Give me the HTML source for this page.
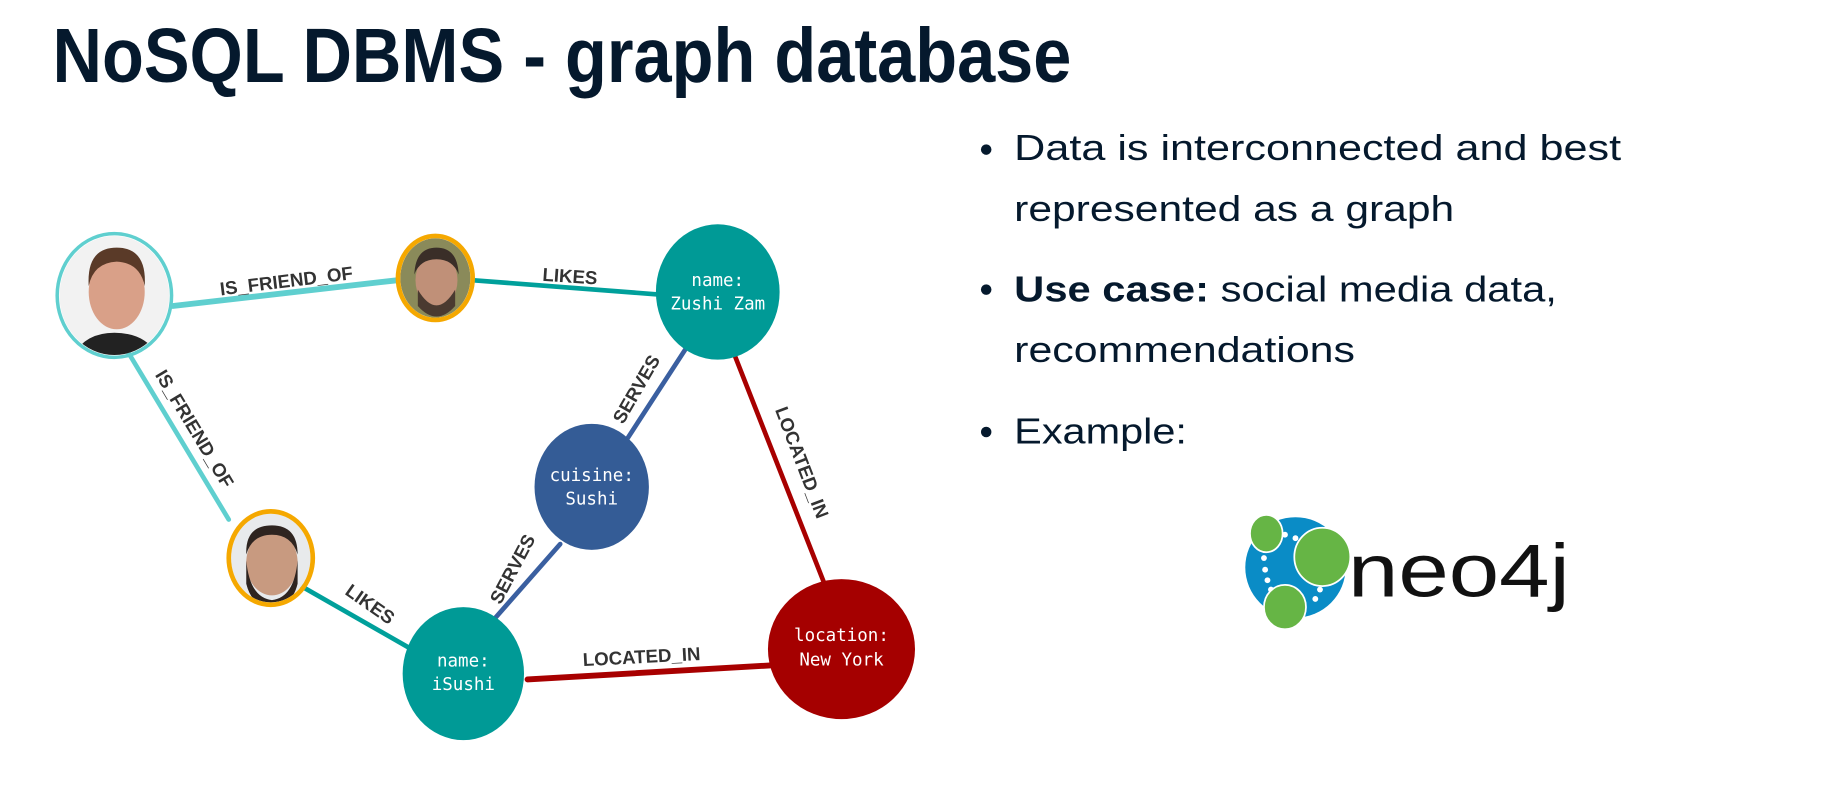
<!DOCTYPE html>
<html><head><meta charset="utf-8"><style>
html,body{margin:0;padding:0;background:#fff;}
svg{display:block;}
</style></head><body>
<svg width="1830" height="801" viewBox="0 0 1568 686" xmlns="http://www.w3.org/2000/svg">
<rect width="1568" height="686" fill="#fff"/>
<text x="45" y="70" font-family="Liberation Sans, sans-serif" font-weight="bold" font-size="66" fill="#05192d" textLength="873" lengthAdjust="spacingAndGlyphs">NoSQL DBMS - graph database</text>

<!-- bullets -->
<g font-family="Liberation Sans, sans-serif" font-size="31" fill="#05192d">
<circle cx="845" cy="128" r="4.5"/>
<text x="869" y="137" textLength="520" lengthAdjust="spacingAndGlyphs">Data is interconnected and best</text>
<text x="869" y="189" textLength="377" lengthAdjust="spacingAndGlyphs">represented as a graph</text>
<circle cx="845" cy="248" r="4.5"/>
<text x="869" y="258" textLength="465" lengthAdjust="spacingAndGlyphs"><tspan font-weight="bold">Use case:</tspan> social media data,</text>
<text x="869" y="310" textLength="292" lengthAdjust="spacingAndGlyphs">recommendations</text>
<circle cx="845" cy="370" r="4.5"/>
<text x="869" y="380" textLength="148" lengthAdjust="spacingAndGlyphs">Example:</text>
</g>

<!-- neo4j logo -->
<circle cx="1110" cy="486" r="43" fill="#0a8cc6"/>
<g fill="#fff">
<circle cx="1101" cy="458" r="2.5"/><circle cx="1110" cy="461" r="2.5"/>
<circle cx="1083" cy="478" r="2.5"/><circle cx="1084" cy="488" r="2.5"/><circle cx="1086" cy="497" r="2.5"/><circle cx="1089" cy="505" r="2.5"/>
<circle cx="1131" cy="505" r="2.5"/><circle cx="1127" cy="513" r="2.5"/>
</g>
<ellipse cx="1085" cy="457" rx="14" ry="16" fill="#66b545" stroke="#fff" stroke-width="1.5"/>
<ellipse cx="1133" cy="477" rx="24" ry="25" fill="#66b545" stroke="#fff" stroke-width="1.5"/>
<ellipse cx="1101" cy="520" rx="18" ry="19" fill="#66b545" stroke="#fff" stroke-width="1.5"/>
<text x="1155" y="511" font-family="Liberation Sans, sans-serif" font-size="64" fill="#111" textLength="190" lengthAdjust="spacingAndGlyphs">neo4j</text>

<!-- edges -->
<g stroke-linecap="round">
<line x1="148" y1="262" x2="340" y2="240" stroke="#5fcfcf" stroke-width="5"/>
<line x1="406" y1="240" x2="562" y2="252" stroke="#00a09b" stroke-width="4"/>
<line x1="110" y1="302" x2="196" y2="445" stroke="#5fcfcf" stroke-width="4"/>
<line x1="258" y1="502" x2="356" y2="558" stroke="#00a09b" stroke-width="4"/>
<line x1="588" y1="298" x2="536" y2="378" stroke="#3a5fa0" stroke-width="4"/>
<line x1="480" y1="466" x2="422" y2="532" stroke="#3a5fa0" stroke-width="4"/>
<line x1="629" y1="303" x2="706" y2="499" stroke="#a80000" stroke-width="4"/>
<line x1="452" y1="582" x2="660" y2="570" stroke="#a80000" stroke-width="5"/>
</g>
<g font-family="Liberation Sans, sans-serif" font-weight="bold" font-size="16" fill="#333" text-anchor="middle">
<text transform="translate(246,246) rotate(-7)">IS_FRIEND_OF</text>
<text transform="translate(488,242) rotate(4)">LIKES</text>
<text transform="translate(162,370) rotate(59)">IS_FRIEND_OF</text>
<text transform="translate(314,522) rotate(35)">LIKES</text>
<text transform="translate(550,336) rotate(-60)">SERVES</text>
<text transform="translate(444,490) rotate(-62)">SERVES</text>
<text transform="translate(682,398) rotate(69)">LOCATED_IN</text>
<text transform="translate(550,568) rotate(-3)">LOCATED_IN</text>
</g>

<!-- nodes -->
<ellipse cx="615" cy="250" rx="53" ry="58" fill="#009a96"/>
<ellipse cx="507" cy="417" rx="49" ry="54" fill="#345c96"/>
<ellipse cx="397" cy="577" rx="52" ry="57" fill="#009a96"/>
<ellipse cx="721" cy="556" rx="63" ry="60" fill="#a50000"/>
<g font-family="DejaVu Sans Mono, Liberation Mono, monospace" font-size="15" fill="#fff" text-anchor="middle">
<text x="615" y="245">name:</text><text x="615" y="265">Zushi Zam</text>
<text x="507" y="412">cuisine:</text><text x="507" y="432">Sushi</text>
<text x="397" y="571">name:</text><text x="397" y="591">iSushi</text>
<text x="721" y="549">location:</text><text x="721" y="570">New York</text>
</g>

<!-- person 1 -->
<defs>
<clipPath id="c1"><ellipse cx="98" cy="253" rx="47" ry="51"/></clipPath>
<clipPath id="c2"><ellipse cx="373" cy="238" rx="30" ry="34"/></clipPath>
<clipPath id="c3"><ellipse cx="232" cy="478" rx="34" ry="38"/></clipPath>
</defs>
<g clip-path="url(#c1)">
<rect x="50" y="200" width="100" height="110" fill="#f2f2f2"/>
<path d="M60 310 Q70 285 98 285 Q128 285 138 310 Z" fill="#222"/>
<ellipse cx="100" cy="250" rx="24" ry="32" fill="#d9a088"/>
<path d="M76 245 Q74 212 100 212 Q126 212 124 245 Q120 225 100 224 Q80 225 76 245Z" fill="#5a3a28"/>
</g>
<ellipse cx="98" cy="253" rx="49" ry="53" fill="none" stroke="#5fcfcf" stroke-width="3"/>
<g clip-path="url(#c2)">
<rect x="340" y="200" width="70" height="80" fill="#8a8a5a"/>
<ellipse cx="374" cy="240" rx="18" ry="24" fill="#c09078"/>
<path d="M358 248 Q374 275 390 248 L390 262 Q374 280 358 262Z" fill="#4a3a30"/>
<path d="M355 235 Q356 212 374 212 Q392 212 393 235 Q388 222 374 222 Q360 222 355 235Z" fill="#3a2e28"/>
</g>
<ellipse cx="373" cy="238" rx="32" ry="36" fill="none" stroke="#f5a800" stroke-width="4"/>
<g clip-path="url(#c3)">
<rect x="195" y="440" width="75" height="80" fill="#e8eaec"/>
<ellipse cx="233" cy="482" rx="22" ry="28" fill="#c89a80"/>
<path d="M211 480 Q214 512 233 514 Q252 512 255 480 L255 500 Q250 520 233 520 Q216 520 211 500Z" fill="#2e2420"/>
<path d="M211 475 Q210 450 233 450 Q255 450 255 475 Q250 458 233 458 Q216 458 211 475Z" fill="#2e2420"/>
</g>
<ellipse cx="232" cy="478" rx="36" ry="40" fill="none" stroke="#f5a800" stroke-width="4"/>
</svg>
</body></html>
